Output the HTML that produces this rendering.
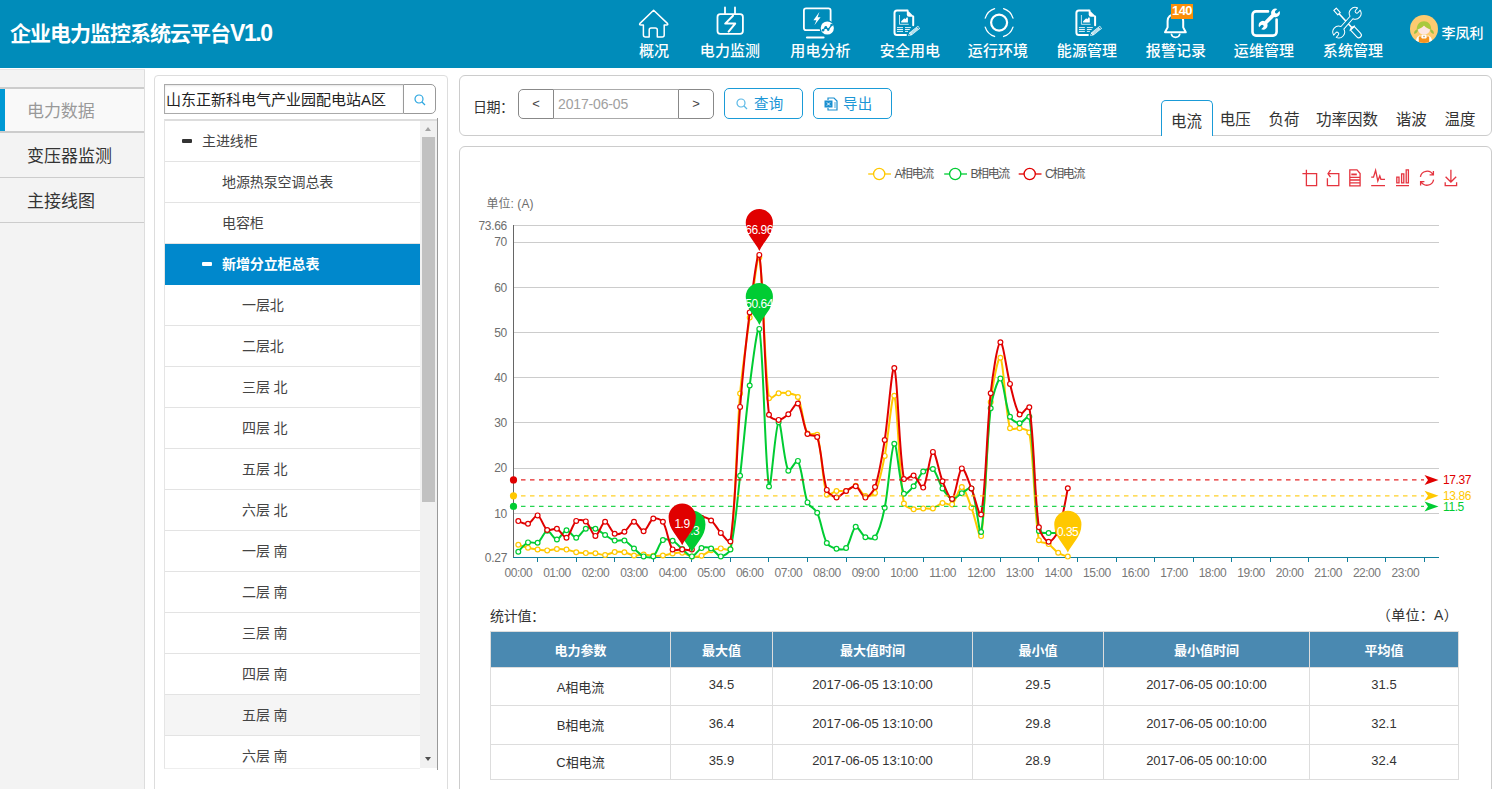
<!DOCTYPE html>
<html lang="zh-CN"><head><meta charset="utf-8"><title>企业电力监控系统云平台V1.0</title>
<style>
*{box-sizing:border-box;margin:0;padding:0}
html,body{width:1494px;height:789px;overflow:hidden;background:#fff;font-family:"Liberation Sans","Noto Sans CJK SC",sans-serif;color:#333}
#hdr{position:absolute;left:0;top:0;width:1492px;height:68px;background:#008cba}
#navsvg{position:absolute;left:0;top:0}
#title{position:absolute;left:10px;top:16px;font-size:21px;font-weight:bold;color:#fff;letter-spacing:-1px;line-height:34px;white-space:nowrap}
.nav{position:absolute;top:0;width:100px;height:68px;text-align:center;color:#fff}
.nav span{position:absolute;left:0;width:100px;top:41px;font-size:15px;line-height:20px;letter-spacing:0.1px;white-space:nowrap;font-weight:500;text-indent:0}
.badge{position:absolute;left:45px;top:4px;width:22px;height:15px;z-index:2;background:#fb8f09;color:#fff;font-size:13px;line-height:13px;font-weight:bold;text-align:center;letter-spacing:-0.6px}
#user{position:absolute;left:1410px;top:15px;height:30px;color:#fff}
#user svg{position:absolute;left:0;top:0;width:28px;height:28px}
#user span{position:absolute;left:31.500px;top:7.500px;font-size:14px;line-height:20px;letter-spacing:0;white-space:nowrap;font-weight:500}
#side{position:absolute;left:0;top:69px;width:145px;height:720px;background:#f3f3f3;border-right:1px solid #ddd;border-top:1px solid #e6e6e6}
.sitem{position:absolute;left:0;width:144px;height:46px;border-top:1px solid #ccc;border-bottom:1px solid #ccc;font-size:17px;line-height:48px;padding-left:27px;color:#333;letter-spacing:0}
.sitem:nth-child(1){top:17px}
.sitem:nth-child(2){top:62px}
.sitem:nth-child(3){top:107px}
.sitem.act{background:#f9f9f9;box-shadow:inset 5px 0 0 #0099d4;color:#999;border-top:2px solid #ccc;border-bottom:2px solid #ccc;line-height:45px;letter-spacing:-0.1px}
#treep{position:absolute;left:154px;top:75px;width:294px;height:730px;border:1px solid #ddd;border-radius:4px;background:#fff}
#search{position:absolute;left:9px;top:8px;width:272px;height:30px}
.sin{position:absolute;left:0;top:0;width:239px;height:30px;border:1px solid #aaa;border-right:none;font-size:15px;line-height:29px;padding-left:1px;color:#222;white-space:nowrap;overflow:hidden;letter-spacing:0;box-shadow:inset 0 1px 2px rgba(0,0,0,.1)}
.sbtn{position:absolute;left:239px;top:0;width:33px;height:30px;border:1px solid #999;border-radius:0 5px 5px 0;background:#fff}
.sbtn svg{position:absolute;left:10px;top:9px;width:12px;height:12px}
#tree{position:absolute;left:9px;top:43px;width:256px;height:650px;overflow:hidden;border-top:2px solid #ddd;border-left:1px solid #e5e5e5;border-bottom:1px solid #eee}
.trow{position:relative;height:41px;border-bottom:1px solid #e3e3e3;font-size:14px;line-height:40px;color:#444;white-space:nowrap;background:#fff;letter-spacing:-0.1px}
.trow.l0{padding-left:37px}
.trow.l1{padding-left:57px}
.trow.l2{padding-left:77px}
.trow.sel{background:#0088cc;color:#fff;font-weight:bold;border-bottom-color:#0088cc}
.trow.hov{background:#f5f5f5}
.trow .minus{position:absolute;top:18px;width:10px;height:4px;background:#333;border-radius:1px}
.trow.l0 .minus{left:17px}
.trow.l1 .minus{left:37px;background:#fff}
#sbar{position:absolute;left:265px;top:42px;width:18px;height:652px;background:linear-gradient(#fff 0,#fff 1px,#ddd 1px,#ddd 3px,#f1f1f1 3px,#f1f1f1 650px,#fff 650px);border-right:1px solid #999}
#sbar .thumb{position:absolute;left:2px;top:19px;width:13px;height:365px;background:#c1c1c1}
#sbar .up{position:absolute;left:5px;top:9px;border:3.500px solid transparent;border-bottom:4px solid #a3a3a3;border-top:none}
#sbar .down{position:absolute;left:5px;bottom:9px;border:3.500px solid transparent;border-top:4px solid #505050;border-bottom:none}
#topp{position:absolute;left:459px;top:75px;width:1033px;height:61px;border:1px solid #ccc;border-radius:6px;background:#fff}
#topp .lbl{position:absolute;left:13px;top:21px;font-size:14px;line-height:20px;color:#333;letter-spacing:-0.5px}
.dgrp{position:absolute;left:58px;top:13px;width:196px;height:30px}
.db{position:absolute;top:0;width:36px;height:30px;border:1px solid #888;font-size:13px;line-height:28px;text-align:center;color:#444;background:#fff}
.db.l{left:0;border-radius:5px 0 0 5px}
.db.r{left:160px;border-radius:0 5px 5px 0}
.dv{position:absolute;left:36px;top:0;width:124px;height:30px;border-top:1px solid #aaa;border-bottom:1px solid #aaa;font-size:14px;line-height:28px;color:#a0a0a0;padding-left:4px;letter-spacing:-0.15px}
.btn{position:absolute;top:12px;height:31px;border:1px solid #1a9bd7;border-radius:5px;color:#1b96d6;font-size:14.500px;line-height:31px;background:#fff}
.btn.q{left:264px;width:79px}
.btn.e{left:353px;width:79px}
.btn svg{position:absolute;left:10px;top:8px;width:14px;height:14px}
.btn span{position:absolute;left:29px;top:0;letter-spacing:0.2px;white-space:nowrap}
#tabs{position:absolute;left:701px;top:24px;height:36px;white-space:nowrap}
.tab{position:absolute;top:0;height:36px;width:80px;font-size:15.5px;line-height:40px;color:#333;letter-spacing:0;text-align:center;white-space:nowrap}
.tab.act{left:0;width:52px;border:1px solid #1a9bd7;border-bottom:none;border-radius:5px 5px 0 0;background:#fff;height:36px;line-height:41px;text-indent:-1px}
.tab:nth-child(2){left:34.200px}
.tab:nth-child(3){left:83px}
.tab:nth-child(4){left:146.100px}
.tab:nth-child(5){left:210.200px}
.tab:nth-child(6){left:259px}
#chartp{position:absolute;left:459px;top:146px;width:1033px;height:660px;border:1px solid #ccc;border-radius:6px;background:#fff}
#chartp svg.chart{position:absolute;left:-460px;top:-147px}
.stl{position:absolute;left:30px;top:460px;font-size:14px;line-height:18px;color:#333;letter-spacing:-0.3px}
.str{position:absolute;right:33px;top:459px;font-size:14px;line-height:18px;color:#333;letter-spacing:0.3px}
#tbl{position:absolute;left:30px;top:484px;width:968px;border-collapse:collapse;table-layout:fixed;font-size:13px}
#tbl th{background:#4a89b1;color:#fff;height:35.500px;border:1px solid #ddd;font-weight:bold;font-size:13px;letter-spacing:0}
#tbl td{height:38px;border:1px solid #ddd;text-align:center;color:#333;font-size:13px}
#tbl td+td{padding-bottom:3px}
#tbl tr:nth-child(2) td{height:39px}
#tbl tr:nth-child(3) td{height:35.500px}
#tbl th:nth-child(1){width:180px}
#tbl th:nth-child(2){width:102px}
#tbl th:nth-child(3){width:200px}
#tbl th:nth-child(4){width:131px}
#tbl th:nth-child(5){width:206px}
#tbl th:nth-child(6){width:149px}

</style></head><body>
<div id="hdr">
<div id="title">企业电力监控系统云平台<span style="letter-spacing:-1.4px;font-size:23px">V1.0</span></div>
<div class="nav" style="left:604.0px"><span>概况</span></div>
<div class="nav" style="left:680.0px"><span>电力监测</span></div>
<div class="nav" style="left:770.5px"><span>用电分析</span></div>
<div class="nav" style="left:860.0px"><span>安全用电</span></div>
<div class="nav" style="left:948.0px"><span>运行环境</span></div>
<div class="nav" style="left:1037.0px"><span>能源管理</span></div>
<div class="nav" style="left:1126.0px"><b class="badge">140</b><span>报警记录</span></div>
<div class="nav" style="left:1214.0px"><span>运维管理</span></div>
<div class="nav" style="left:1303.0px"><span>系统管理</span></div>
<svg id="navsvg" width="1494" height="68" viewBox="0 0 1494 68" fill="none" stroke="#fff" stroke-width="1.600" stroke-linecap="round" stroke-linejoin="round">
<path d="M653.600 10.200 L640 23.400 Q638.800 25 641 25 H643.400 V35 Q643.400 37 645.400 37 H649.200 V30 Q649.200 28 651.200 28 H655.300 Q657.300 28 657.300 30 V37 H662.200 Q664.200 37 664.200 35 V25 H666.400 Q668.600 25 667.400 23.400 Z" stroke-width="1.500"/>
<rect x="717.500" y="14.200" width="25.400" height="19.600" rx="2.800" stroke-width="1.800"/><path d="M725 7.500 V14 M735 7.500 V14" stroke-width="1.800"/><path d="M733 15.800 L725.200 23.600 H735.200 L728.600 31.600" stroke-width="2"/>
<rect x="803.900" y="8.300" width="26.700" height="21.800" rx="2.200" stroke-width="1.800"/><path d="M807 37.500 H823.500" stroke-width="2.200"/><path d="M819.400 12 L813.400 20.200 H816.400 L814.400 25.200 L820.600 17.200 H817.600 Z" fill="#fff" stroke="none"/><circle cx="827.300" cy="28" r="7.800" fill="#008cba" stroke="none"/><circle cx="827.300" cy="28" r="6.600" fill="#fff" stroke="none"/><path d="M822.800 30.400 L825.800 27.200 L828.200 29.600 L832 24.600" stroke="#008cba" stroke-width="1.300"/><g fill="#008cba" stroke="none"><circle cx="825.800" cy="27.200" r="1.300"/><circle cx="828.200" cy="29.600" r="1.300"/><circle cx="831.600" cy="25" r="1.300"/><circle cx="823" cy="30.200" r="1.300"/></g>
<g transform="translate(0.0 0)"><path d="M907.600 10.400 H897 Q894.500 10.400 894.500 12.900 V32.500 Q894.500 35 897 35 H906 M913.200 16.500 V25.200" stroke-width="2"/><path d="M906.800 9.400 L914.200 16.800 H909 Q906.800 16.800 906.800 14.600 Z" fill="#fff" stroke="none"/><path d="M899.500 15.400 V24.300 H908.300" stroke-width="0.900" opacity="0.850"/><path d="M901.200 22.600 V21.300 L904.300 18.200 L905.300 19.300 L907.100 17 L907.900 18.200 V22.600 Z" fill="#fff" stroke="none"/><path d="M897 27.600 H903 M905 27.600 H910.900 M897 29.500 H903 M905 29.500 H909.800 M897 31.400 H903 M905 31.400 H908" stroke-width="0.900" stroke-linecap="butt"/><g transform="translate(908.100 35.900) rotate(-39)"><path d="M0 0 L3.200 -1.700 H14 V1.700 H3.200 Z" fill="#fff" stroke="none"/><path d="M1.400 0 L2.600 0" stroke="#008cba" stroke-width="0.900"/><path d="M4.200 -0.900 H11.600 M4.200 0 H11.600 M4.200 0.900 H11.600" stroke="#008cba" stroke-width="0.450" opacity="0.700"/><rect x="12.300" y="-1.100" width="1.100" height="2.200" fill="#008cba" stroke="none"/></g></g>
<circle cx="999.100" cy="22.600" r="8" stroke-width="2.200"/><path d="M1012.99 27.11 A14.60 14.60 0 0 1 1003.61 36.49" stroke-width="1.300"/><path d="M994.59 36.49 A14.60 14.60 0 0 1 985.21 27.11" stroke-width="1.300"/><path d="M985.21 18.09 A14.60 14.60 0 0 1 994.59 8.71" stroke-width="1.300"/><path d="M1003.61 8.71 A14.60 14.60 0 0 1 1012.99 18.09" stroke-width="1.300"/>
<g transform="translate(181.9 0)"><path d="M907.600 10.400 H897 Q894.500 10.400 894.500 12.900 V32.500 Q894.500 35 897 35 H906 M913.200 16.500 V25.200" stroke-width="2"/><path d="M906.800 9.400 L914.200 16.800 H909 Q906.800 16.800 906.800 14.600 Z" fill="#fff" stroke="none"/><path d="M899.500 15.400 V24.300 H908.300" stroke-width="0.900" opacity="0.850"/><path d="M901.200 22.600 V21.300 L904.300 18.200 L905.300 19.300 L907.100 17 L907.900 18.200 V22.600 Z" fill="#fff" stroke="none"/><path d="M897 27.600 H903 M905 27.600 H910.900 M897 29.500 H903 M905 29.500 H909.800 M897 31.400 H903 M905 31.400 H908" stroke-width="0.900" stroke-linecap="butt"/><g transform="translate(908.100 35.900) rotate(-39)"><path d="M0 0 L3.200 -1.700 H14 V1.700 H3.200 Z" fill="#fff" stroke="none"/><path d="M1.400 0 L2.600 0" stroke="#008cba" stroke-width="0.900"/><path d="M4.200 -0.900 H11.600 M4.200 0 H11.600 M4.200 0.900 H11.600" stroke="#008cba" stroke-width="0.450" opacity="0.700"/><rect x="12.300" y="-1.100" width="1.100" height="2.200" fill="#008cba" stroke="none"/></g></g>
<path d="M1165 32.300 L1167.600 27.400 V21 C1167.600 16.500 1170.600 14.200 1175.400 14.200 C1180.200 14.200 1183.200 16.500 1183.200 21 V27.400 L1185.800 32.300 Z" stroke-width="2"/><path d="M1171.400 34.200 C1172.200 38.400 1179 38.400 1179.800 34.200" stroke-width="1.600"/>
<path d="M1276.600 19.500 V32.100 a3.500 3.500 0 0 1 -3.500 3.500 H1256 a3.500 3.500 0 0 1 -3.500 -3.500 V14.900 a3.500 3.500 0 0 1 3.500 -3.500 H1268" stroke-width="2.600"/><g transform="translate(1269.300 19.100) rotate(-45)"><path d="M4.80 -1.90 A4.40 4.40 0 0 1 12.91 -1.50 L10.20 -1.50 A1.50 1.50 0 0 0 10.20 1.50 L12.91 1.50 A4.40 4.40 0 0 1 4.80 1.90 L-4.80 1.90 A4.40 4.40 0 0 1 -12.91 1.50 L-10.20 1.50 A1.50 1.50 0 0 0 -10.20 -1.50 L-12.91 -1.50 A4.40 4.40 0 0 1 -4.80 -1.90 Z" fill="#fff" stroke="none"/></g>
<g stroke-width="1.100" transform="translate(1335.050 9.350) rotate(47.400)"><rect x="0" y="-1.700" width="5.900" height="3.400" fill="#008cba"/><path d="M5.900 0 H25" stroke-width="1.600" stroke-linecap="butt"/><path d="M24.400 -0.800 L25.600 -3.600 V3.600 L24.400 0.800 Z" fill="#fff" stroke-width="0.600"/><path d="M25.700 -2.600 H35 A2.600 2.600 0 0 1 35 2.600 H25.700 Z" fill="#008cba"/></g><g stroke-width="1" transform="translate(1346.950 22.650) rotate(-48.600)"><path d="M6.86 -1.90 A5.90 5.90 0 0 1 18.10 -1.70 L15.00 -1.70 A1.70 1.70 0 0 0 15.00 1.70 L18.10 1.70 A5.90 5.90 0 0 1 6.86 1.90 L-6.86 1.90 A5.90 5.90 0 0 1 -18.10 1.70 L-15.00 1.70 A1.70 1.70 0 0 0 -15.00 -1.70 L-18.10 -1.70 A5.90 5.90 0 0 1 -6.86 -1.90 Z" fill="#008cba"/></g>
</svg>
<div id="user"><svg viewBox="0 0 28 28"><circle cx="14" cy="14" r="14" fill="#fdcb70"/><path d="M6.500 14.500 C4.500 15.500 3.800 17.500 4.300 19 C6 18.600 7.500 17.200 8 15.500 Z M21.500 14.500 C23.500 15.500 24.200 17.500 23.700 19 C22 18.600 20.500 17.200 20 15.500 Z" fill="#9bbf45"/><path d="M6.800 15 C6.500 9.500 10 6.200 14 6.200 C18 6.200 21.500 9.500 21.200 15 C19 14 16 12.500 14 10.500 C12 12.500 9 14 6.800 15 Z" fill="#a9c93f"/><path d="M8 14.600 C10 13.800 12.500 12.400 14 10.800 C15.500 12.400 18 13.800 20 14.600 C19.600 17.800 17 19.600 14 19.600 C11 19.600 8.400 17.800 8 14.600 Z" fill="#fde6e2"/><path d="M6 25.600 C6.400 22.500 7.600 21 9.500 20.400 H18.500 C20.400 21 21.600 22.500 22 25.600 C19.800 27.200 17 28 14 28 C11 28 8.200 27.200 6 25.600 Z" fill="#fff"/><path d="M8.800 27 V21.500 H10.800 V20 H17.200 V21.500 H19.200 V27 C17.600 27.700 15.800 28 14 28 C12.200 28 10.400 27.700 8.800 27 Z" fill="#f7931e"/><rect x="11.300" y="19.800" width="5.400" height="3.600" rx="0.800" fill="#fff"/><rect x="13.200" y="20.800" width="1.600" height="1.400" fill="#c9a26a"/></svg><span>李凤利</span></div>
</div>
<div id="side">
 <div class="sitem act">电力数据</div>
 <div class="sitem">变压器监测</div>
 <div class="sitem">主接线图</div>
</div>
<div id="treep">
 <div id="search"><div class="sin">山东正新科电气产业园配电站A区</div><div class="sbtn"><svg viewBox="0 0 12 12" fill="none" stroke="#2ba6e0" stroke-width="1.200"><circle cx="5" cy="5" r="4"/><path d="M8 8 L11 11"/></svg></div></div>
 <div id="tree">
<div class="trow l0"><i class="minus"></i><span>主进线柜</span></div>
<div class="trow l1"><span>地源热泵空调总表</span></div>
<div class="trow l1"><span>电容柜</span></div>
<div class="trow l1 sel"><i class="minus"></i><span>新增分立柜总表</span></div>
<div class="trow l2"><span>一层北</span></div>
<div class="trow l2"><span>二层北</span></div>
<div class="trow l2"><span>三层 北</span></div>
<div class="trow l2"><span>四层 北</span></div>
<div class="trow l2"><span>五层 北</span></div>
<div class="trow l2"><span>六层 北</span></div>
<div class="trow l2"><span>一层 南</span></div>
<div class="trow l2"><span>二层 南</span></div>
<div class="trow l2"><span>三层 南</span></div>
<div class="trow l2"><span>四层 南</span></div>
<div class="trow l2 hov"><span>五层 南</span></div>
<div class="trow l2"><span>六层 南</span></div>

 </div>
 <div id="sbar"><i class="up"></i><i class="thumb"></i><i class="down"></i></div>
</div>
<div id="topp">
 <span class="lbl">日期：</span>
 <div class="dgrp"><div class="db l">&lt;</div><div class="dv">2017-06-05</div><div class="db r">&gt;</div></div>
 <div class="btn q"><svg viewBox="0 0 14 14" fill="none" stroke="#5bb8e6" stroke-width="1.200"><circle cx="6" cy="6" r="4"/><path d="M9 9 L12 12"/></svg><span>查询</span></div>
 <div class="btn e"><svg viewBox="0 0 14 14" fill="none" stroke="#1a8fd0" stroke-width="1.200"><path d="M4 3 V1 H10 L13 4 V13 H4 V11"/><rect x="0.500" y="3.500" width="8" height="7" fill="#1a8fd0" stroke="none"/><path d="M3 5.500 L6 8.500 M6 5.500 L3 8.500" stroke="#fff" stroke-width="1"/><path d="M10 6 H12 M10 8 H12 M10 10 H12" stroke-width="0.800"/></svg><span>导出</span></div>
 <div id="tabs"><div class="tab act">电流</div><div class="tab">电压</div><div class="tab">负荷</div><div class="tab">功率因数</div><div class="tab">谐波</div><div class="tab">温度</div></div>
</div>
<div id="chartp">
<svg class="chart" width="1494" height="789" viewBox="0 0 1494 789" font-family="Liberation Sans, Noto Sans CJK SC, sans-serif">
<g stroke="#ccc" stroke-width="1" shape-rendering="crispEdges"><path d="M514 225.5 H1439"/><path d="M514 242.5 H1439"/><path d="M514 287.5 H1439"/><path d="M514 332.5 H1439"/><path d="M514 377.5 H1439"/><path d="M514 422.5 H1439"/><path d="M514 468.5 H1439"/><path d="M514 513.5 H1439"/></g>
<g fill="#6e6e6e" font-size="12" text-anchor="end" letter-spacing="-0.3"><text x="507" y="229.8">73.66</text><text x="507" y="246.3">70</text><text x="507" y="291.5">60</text><text x="507" y="336.7">50</text><text x="507" y="381.9">40</text><text x="507" y="427.1">30</text><text x="507" y="472.3">20</text><text x="507" y="517.5">10</text><text x="507" y="561.5">0.27</text></g>
<text x="486.500" y="208" fill="#6e6e6e" font-size="12" letter-spacing="0.050">单位: (A)</text>
<path d="M513.5 225 V558" stroke="#666" stroke-width="1" shape-rendering="crispEdges"/>
<path d="M513 557.5 H1439" stroke="#0f7f9c" stroke-width="1" shape-rendering="crispEdges"/>
<g stroke="#0f7f9c" stroke-width="1" shape-rendering="crispEdges"><path d="M537.5 557 V562"/><path d="M576.5 557 V562"/><path d="M614.5 557 V562"/><path d="M653.5 557 V562"/><path d="M691.5 557 V562"/><path d="M730.5 557 V562"/><path d="M768.5 557 V562"/><path d="M807.5 557 V562"/><path d="M846.5 557 V562"/><path d="M884.5 557 V562"/><path d="M923.5 557 V562"/><path d="M961.5 557 V562"/><path d="M1000.5 557 V562"/><path d="M1038.5 557 V562"/><path d="M1077.5 557 V562"/><path d="M1116.5 557 V562"/><path d="M1154.5 557 V562"/><path d="M1193.5 557 V562"/><path d="M1231.5 557 V562"/><path d="M1270.5 557 V562"/><path d="M1308.5 557 V562"/><path d="M1347.5 557 V562"/><path d="M1385.5 557 V562"/><path d="M1424.5 557 V562"/></g>
<g fill="#777" font-size="12" text-anchor="middle" letter-spacing="-0.5"><text x="518.3" y="577">00:00</text><text x="556.9" y="577">01:00</text><text x="595.4" y="577">02:00</text><text x="634.0" y="577">03:00</text><text x="672.6" y="577">04:00</text><text x="711.1" y="577">05:00</text><text x="749.7" y="577">06:00</text><text x="788.3" y="577">07:00</text><text x="826.8" y="577">08:00</text><text x="865.4" y="577">09:00</text><text x="903.9" y="577">10:00</text><text x="942.5" y="577">11:00</text><text x="981.1" y="577">12:00</text><text x="1019.6" y="577">13:00</text><text x="1058.2" y="577">14:00</text><text x="1096.8" y="577">15:00</text><text x="1135.3" y="577">16:00</text><text x="1173.9" y="577">17:00</text><text x="1212.4" y="577">18:00</text><text x="1251.0" y="577">19:00</text><text x="1289.6" y="577">20:00</text><text x="1328.1" y="577">21:00</text><text x="1366.7" y="577">22:00</text><text x="1405.3" y="577">23:00</text></g>
<path d="M518.3 544.7C518.3 544.7 525.0 547.0 528.0 547.7C530.8 548.4 534.7 549.1 537.6 549.5C540.5 549.9 544.4 550.4 547.2 550.4C550.1 550.3 554.0 549.1 556.9 549.0C559.8 548.8 563.7 549.1 566.5 549.6C569.5 550.1 573.2 551.7 576.2 552.2C579.0 552.8 582.9 552.9 585.8 553.1C588.7 553.2 592.6 553.0 595.4 553.3C598.4 553.6 602.2 555.1 605.1 555.0C608.0 554.8 611.8 552.5 614.7 552.1C617.6 551.7 621.6 551.7 624.4 552.2C627.3 552.8 631.0 555.2 634.0 555.5C636.8 555.9 640.8 554.4 643.6 554.5C646.5 554.5 650.4 555.6 653.3 555.8C656.2 556.0 660.1 555.9 662.9 555.5C665.9 555.2 669.7 553.9 672.6 553.5C675.4 553.1 679.4 552.2 682.2 552.7C685.2 553.1 688.9 555.9 691.9 556.4C694.6 556.8 698.8 556.7 701.5 555.8C704.6 554.8 708.1 551.4 711.1 550.2C713.8 549.1 717.9 548.6 720.8 548.4C723.6 548.2 730.1 551.7 730.4 549.0C735.9 505.2 736.2 440.0 740.1 393.5C742.0 370.6 746.5 340.3 749.7 317.6C752.3 299.5 757.6 250.2 759.3 257.5C763.4 274.4 763.6 360.4 769.0 398.2C769.4 401.1 775.6 394.0 778.6 393.2C781.3 392.5 785.5 392.7 788.3 393.2C791.3 393.8 796.7 394.4 797.9 397.0C802.4 406.5 802.9 424.5 807.5 433.5C808.7 435.8 816.4 432.2 817.2 434.7C822.2 450.5 821.9 480.3 826.8 494.7C827.7 497.2 833.5 491.6 836.5 491.0C839.3 490.5 843.4 491.7 846.1 491.0C849.2 490.2 853.2 485.2 855.7 485.8C859.0 486.6 862.0 494.7 865.4 495.9C867.8 496.8 873.8 495.4 875.0 492.9C879.6 483.4 882.4 467.1 884.7 455.9C888.2 438.0 892.2 390.6 894.3 395.8C898.0 405.0 898.7 472.8 903.9 503.6C904.5 506.8 910.5 508.4 913.6 509.2C916.3 509.9 920.3 508.5 923.2 508.4C926.1 508.3 930.2 509.2 932.9 508.4C936.0 507.5 939.4 503.6 942.5 503.0C945.2 502.4 950.2 506.0 952.1 504.4C956.0 501.2 959.1 486.7 961.8 487.1C964.9 487.6 968.9 501.3 971.4 507.6C974.7 516.0 980.0 541.9 981.1 536.1C985.8 510.2 986.4 442.0 990.7 401.9C992.2 388.4 998.1 354.6 1000.4 357.7C1003.9 362.5 1004.9 409.6 1010.0 428.2C1010.7 430.7 1016.9 427.6 1019.6 428.2C1022.7 428.9 1028.8 429.5 1029.3 432.5C1034.5 463.1 1033.6 509.7 1038.9 540.3C1039.4 543.2 1046.0 542.4 1048.6 544.1C1051.8 546.2 1055.0 550.7 1058.2 552.8C1060.8 554.5 1067.8 556.6 1067.8 556.6" fill="none" stroke="#ffc800" stroke-width="2" stroke-linejoin="round"/>
<g fill="#fff" stroke="#ffc800" stroke-width="1.2"><circle cx="518.3" cy="544.7" r="2.4"/><circle cx="528.0" cy="547.7" r="2.4"/><circle cx="537.6" cy="549.5" r="2.4"/><circle cx="547.2" cy="550.4" r="2.4"/><circle cx="556.9" cy="549.0" r="2.4"/><circle cx="566.5" cy="549.6" r="2.4"/><circle cx="576.2" cy="552.2" r="2.4"/><circle cx="585.8" cy="553.1" r="2.4"/><circle cx="595.4" cy="553.3" r="2.4"/><circle cx="605.1" cy="555.0" r="2.4"/><circle cx="614.7" cy="552.1" r="2.4"/><circle cx="624.4" cy="552.2" r="2.4"/><circle cx="634.0" cy="555.5" r="2.4"/><circle cx="643.6" cy="554.5" r="2.4"/><circle cx="653.3" cy="555.8" r="2.4"/><circle cx="662.9" cy="555.5" r="2.4"/><circle cx="672.6" cy="553.5" r="2.4"/><circle cx="682.2" cy="552.7" r="2.4"/><circle cx="691.9" cy="556.4" r="2.4"/><circle cx="701.5" cy="555.8" r="2.4"/><circle cx="711.1" cy="550.2" r="2.4"/><circle cx="720.8" cy="548.4" r="2.4"/><circle cx="730.4" cy="549.0" r="2.4"/><circle cx="740.1" cy="393.5" r="2.4"/><circle cx="749.7" cy="317.6" r="2.4"/><circle cx="759.3" cy="257.5" r="2.4"/><circle cx="769.0" cy="398.2" r="2.4"/><circle cx="778.6" cy="393.2" r="2.4"/><circle cx="788.3" cy="393.2" r="2.4"/><circle cx="797.9" cy="397.0" r="2.4"/><circle cx="807.5" cy="433.5" r="2.4"/><circle cx="817.2" cy="434.7" r="2.4"/><circle cx="826.8" cy="494.7" r="2.4"/><circle cx="836.5" cy="491.0" r="2.4"/><circle cx="846.1" cy="491.0" r="2.4"/><circle cx="855.7" cy="485.8" r="2.4"/><circle cx="865.4" cy="495.9" r="2.4"/><circle cx="875.0" cy="492.9" r="2.4"/><circle cx="884.7" cy="455.9" r="2.4"/><circle cx="894.3" cy="395.8" r="2.4"/><circle cx="903.9" cy="503.6" r="2.4"/><circle cx="913.6" cy="509.2" r="2.4"/><circle cx="923.2" cy="508.4" r="2.4"/><circle cx="932.9" cy="508.4" r="2.4"/><circle cx="942.5" cy="503.0" r="2.4"/><circle cx="952.1" cy="504.4" r="2.4"/><circle cx="961.8" cy="487.1" r="2.4"/><circle cx="971.4" cy="507.6" r="2.4"/><circle cx="981.1" cy="536.1" r="2.4"/><circle cx="990.7" cy="401.9" r="2.4"/><circle cx="1000.4" cy="357.7" r="2.4"/><circle cx="1010.0" cy="428.2" r="2.4"/><circle cx="1019.6" cy="428.2" r="2.4"/><circle cx="1029.3" cy="432.5" r="2.4"/><circle cx="1038.9" cy="540.3" r="2.4"/><circle cx="1048.6" cy="544.1" r="2.4"/><circle cx="1058.2" cy="552.8" r="2.4"/><circle cx="1067.8" cy="556.6" r="2.4"/></g>
<path d="M518.3 551.8C518.3 551.8 524.6 544.0 528.0 542.4C530.4 541.2 535.4 544.1 537.6 542.8C541.2 540.7 544.1 531.4 547.2 530.8C549.9 530.4 554.0 539.6 556.9 539.5C559.8 539.4 563.5 530.5 566.5 530.3C569.3 530.0 573.4 537.9 576.2 537.7C579.2 537.4 582.5 530.3 585.8 528.8C588.3 527.6 592.8 527.9 595.4 528.8C598.6 529.8 602.2 533.2 605.1 535.0C607.9 536.7 611.6 539.7 614.7 540.6C617.4 541.3 621.9 539.5 624.4 540.6C627.6 541.9 631.1 546.2 634.0 548.5C636.9 550.9 640.4 555.0 643.6 556.4C646.2 557.4 651.3 558.0 653.3 556.4C657.1 553.1 659.1 543.2 662.9 540.1C664.9 538.6 670.1 539.6 672.6 540.7C675.9 542.2 679.3 546.6 682.2 549.0C685.0 551.3 689.0 556.5 691.9 556.4C694.8 556.2 698.2 549.5 701.5 548.1C704.0 547.1 708.6 547.5 711.1 548.5C714.4 549.9 717.8 556.2 720.8 556.4C723.6 556.5 729.6 552.7 730.4 549.4C735.4 528.5 737.5 497.9 740.1 475.8C743.2 448.7 746.2 412.5 749.7 385.5C751.9 368.4 757.8 320.8 759.3 328.9C763.6 351.1 764.9 466.7 769.0 486.5C770.7 494.7 775.3 424.9 778.6 422.2C781.1 420.2 783.7 461.6 788.3 470.7C789.5 473.2 796.5 458.6 797.9 460.9C802.3 468.1 803.2 490.7 807.5 502.4C809.0 506.3 815.4 509.0 817.2 512.7C821.2 521.1 822.5 535.0 826.8 543.0C828.3 545.8 833.4 547.9 836.5 548.7C839.1 549.4 844.4 549.9 846.1 548.0C850.2 543.4 852.1 528.8 855.7 526.8C857.9 525.6 861.9 535.3 865.4 537.2C867.7 538.5 873.7 539.7 875.0 537.6C879.4 530.9 882.8 517.0 884.7 507.8C888.6 488.8 891.1 446.1 894.3 443.7C896.8 441.8 899.3 483.4 903.9 493.7C905.1 496.2 911.2 489.0 913.6 486.3C917.0 482.4 919.5 474.9 923.2 471.6C925.3 469.7 931.0 467.4 932.9 469.0C936.8 472.4 939.0 483.0 942.5 488.4C944.8 492.0 948.9 498.2 952.1 499.0C954.7 499.6 958.8 494.8 961.8 493.2C964.6 491.6 970.3 486.1 971.4 488.4C976.1 497.8 979.5 538.4 981.1 532.0C985.3 514.3 986.1 445.1 990.7 408.3C991.9 399.0 997.8 377.5 1000.4 378.6C1003.6 380.0 1005.5 406.5 1010.0 416.8C1011.3 419.8 1016.7 423.2 1019.6 423.2C1022.5 423.2 1028.7 413.8 1029.3 416.8C1034.5 446.2 1033.6 498.9 1038.9 531.0C1039.4 533.8 1045.6 532.7 1048.6 533.0C1051.4 533.3 1055.3 532.7 1058.2 533.0C1061.1 533.3 1067.8 535.0 1067.8 535.0" fill="none" stroke="#00cc33" stroke-width="2" stroke-linejoin="round"/>
<g fill="#fff" stroke="#00cc33" stroke-width="1.2"><circle cx="518.3" cy="551.8" r="2.4"/><circle cx="528.0" cy="542.4" r="2.4"/><circle cx="537.6" cy="542.8" r="2.4"/><circle cx="547.2" cy="530.8" r="2.4"/><circle cx="556.9" cy="539.5" r="2.4"/><circle cx="566.5" cy="530.3" r="2.4"/><circle cx="576.2" cy="537.7" r="2.4"/><circle cx="585.8" cy="528.8" r="2.4"/><circle cx="595.4" cy="528.8" r="2.4"/><circle cx="605.1" cy="535.0" r="2.4"/><circle cx="614.7" cy="540.6" r="2.4"/><circle cx="624.4" cy="540.6" r="2.4"/><circle cx="634.0" cy="548.5" r="2.4"/><circle cx="643.6" cy="556.4" r="2.4"/><circle cx="653.3" cy="556.4" r="2.4"/><circle cx="662.9" cy="540.1" r="2.4"/><circle cx="672.6" cy="540.7" r="2.4"/><circle cx="682.2" cy="549.0" r="2.4"/><circle cx="691.9" cy="556.4" r="2.4"/><circle cx="701.5" cy="548.1" r="2.4"/><circle cx="711.1" cy="548.5" r="2.4"/><circle cx="720.8" cy="556.4" r="2.4"/><circle cx="730.4" cy="549.4" r="2.4"/><circle cx="740.1" cy="475.8" r="2.4"/><circle cx="749.7" cy="385.5" r="2.4"/><circle cx="759.3" cy="328.9" r="2.4"/><circle cx="769.0" cy="486.5" r="2.4"/><circle cx="778.6" cy="422.2" r="2.4"/><circle cx="788.3" cy="470.7" r="2.4"/><circle cx="797.9" cy="460.9" r="2.4"/><circle cx="807.5" cy="502.4" r="2.4"/><circle cx="817.2" cy="512.7" r="2.4"/><circle cx="826.8" cy="543.0" r="2.4"/><circle cx="836.5" cy="548.7" r="2.4"/><circle cx="846.1" cy="548.0" r="2.4"/><circle cx="855.7" cy="526.8" r="2.4"/><circle cx="865.4" cy="537.2" r="2.4"/><circle cx="875.0" cy="537.6" r="2.4"/><circle cx="884.7" cy="507.8" r="2.4"/><circle cx="894.3" cy="443.7" r="2.4"/><circle cx="903.9" cy="493.7" r="2.4"/><circle cx="913.6" cy="486.3" r="2.4"/><circle cx="923.2" cy="471.6" r="2.4"/><circle cx="932.9" cy="469.0" r="2.4"/><circle cx="942.5" cy="488.4" r="2.4"/><circle cx="952.1" cy="499.0" r="2.4"/><circle cx="961.8" cy="493.2" r="2.4"/><circle cx="971.4" cy="488.4" r="2.4"/><circle cx="981.1" cy="532.0" r="2.4"/><circle cx="990.7" cy="408.3" r="2.4"/><circle cx="1000.4" cy="378.6" r="2.4"/><circle cx="1010.0" cy="416.8" r="2.4"/><circle cx="1019.6" cy="423.2" r="2.4"/><circle cx="1029.3" cy="416.8" r="2.4"/><circle cx="1038.9" cy="531.0" r="2.4"/><circle cx="1048.6" cy="533.0" r="2.4"/><circle cx="1058.2" cy="533.0" r="2.4"/><circle cx="1067.8" cy="535.0" r="2.4"/></g>
<path d="M518.3 521.1C518.3 521.1 525.4 524.6 528.0 523.8C531.2 522.9 535.2 514.6 537.6 515.4C540.9 516.5 543.5 527.4 547.2 530.0C549.3 531.4 554.4 527.8 556.9 528.8C560.2 530.1 564.2 538.6 566.5 537.7C570.0 536.3 572.3 524.2 576.2 520.9C578.1 519.3 583.7 519.8 585.8 521.4C589.5 524.3 592.5 535.9 595.4 535.9C598.3 536.0 602.0 522.1 605.1 521.8C607.8 521.5 611.2 531.9 614.7 533.7C617.0 534.9 622.0 533.1 624.4 531.7C627.7 529.6 631.1 521.8 634.0 521.8C636.9 521.7 641.0 531.7 643.6 531.2C646.8 530.7 649.8 520.2 653.3 518.5C655.5 517.4 661.4 519.4 662.9 521.8C667.2 528.6 668.2 543.1 672.6 549.4C674.0 551.4 679.3 549.4 682.2 549.4C685.1 549.4 690.5 551.5 691.9 549.4C696.3 542.0 697.1 524.3 701.5 517.7C702.8 515.6 708.9 518.7 711.1 520.5C714.7 523.3 717.6 529.4 720.8 532.9C723.4 535.7 729.9 544.8 730.4 541.5C735.7 507.1 736.7 447.2 740.1 406.9C742.4 378.5 746.1 340.7 749.7 312.4C751.9 295.1 757.8 246.7 759.3 254.9C763.6 277.4 763.6 368.4 769.0 414.7C769.3 417.9 775.8 420.0 778.6 419.9C781.5 419.8 785.7 416.4 788.3 414.2C791.5 411.4 796.1 401.7 797.9 403.5C801.9 407.6 803.1 426.4 807.5 434.0C808.9 436.4 816.3 434.3 817.2 437.0C822.0 451.1 822.1 475.1 826.8 489.9C827.9 493.3 833.5 497.2 836.5 497.4C839.3 497.6 843.1 492.7 846.1 491.0C848.9 489.4 853.3 485.5 855.7 486.3C859.1 487.4 862.4 497.5 865.4 497.6C868.2 497.7 873.7 491.1 875.0 487.1C879.5 473.8 882.4 454.2 884.7 440.0C888.1 418.5 892.0 363.5 894.3 368.1C897.8 375.2 898.6 449.6 903.9 479.1C904.4 481.8 911.3 474.6 913.6 475.6C917.1 477.1 921.5 489.7 923.2 487.6C927.3 482.6 929.7 452.9 932.9 451.9C935.5 451.0 939.0 472.7 942.5 481.2C944.8 486.8 949.9 500.5 952.1 499.0C955.7 496.6 958.4 470.3 961.8 468.4C964.2 467.1 968.9 482.3 971.4 488.4C974.6 496.1 980.0 519.8 981.1 514.5C985.8 491.3 986.7 429.4 990.7 393.2C992.4 377.7 997.2 343.7 1000.4 342.2C1003.0 340.9 1006.7 371.5 1010.0 383.9C1012.5 393.2 1015.4 409.4 1019.6 414.5C1021.2 416.4 1028.7 404.1 1029.3 407.2C1034.5 437.9 1033.9 491.9 1038.9 527.2C1039.6 532.3 1045.4 541.2 1048.6 541.8C1051.2 542.3 1056.8 535.0 1058.2 531.0C1062.5 518.9 1067.8 488.2 1067.8 488.2" fill="none" stroke="#e00000" stroke-width="2" stroke-linejoin="round"/>
<g fill="#fff" stroke="#e00000" stroke-width="1.2"><circle cx="518.3" cy="521.1" r="2.4"/><circle cx="528.0" cy="523.8" r="2.4"/><circle cx="537.6" cy="515.4" r="2.4"/><circle cx="547.2" cy="530.0" r="2.4"/><circle cx="556.9" cy="528.8" r="2.4"/><circle cx="566.5" cy="537.7" r="2.4"/><circle cx="576.2" cy="520.9" r="2.4"/><circle cx="585.8" cy="521.4" r="2.4"/><circle cx="595.4" cy="535.9" r="2.4"/><circle cx="605.1" cy="521.8" r="2.4"/><circle cx="614.7" cy="533.7" r="2.4"/><circle cx="624.4" cy="531.7" r="2.4"/><circle cx="634.0" cy="521.8" r="2.4"/><circle cx="643.6" cy="531.2" r="2.4"/><circle cx="653.3" cy="518.5" r="2.4"/><circle cx="662.9" cy="521.8" r="2.4"/><circle cx="672.6" cy="549.4" r="2.4"/><circle cx="682.2" cy="549.4" r="2.4"/><circle cx="691.9" cy="549.4" r="2.4"/><circle cx="701.5" cy="517.7" r="2.4"/><circle cx="711.1" cy="520.5" r="2.4"/><circle cx="720.8" cy="532.9" r="2.4"/><circle cx="730.4" cy="541.5" r="2.4"/><circle cx="740.1" cy="406.9" r="2.4"/><circle cx="749.7" cy="312.4" r="2.4"/><circle cx="759.3" cy="254.9" r="2.4"/><circle cx="769.0" cy="414.7" r="2.4"/><circle cx="778.6" cy="419.9" r="2.4"/><circle cx="788.3" cy="414.2" r="2.4"/><circle cx="797.9" cy="403.5" r="2.4"/><circle cx="807.5" cy="434.0" r="2.4"/><circle cx="817.2" cy="437.0" r="2.4"/><circle cx="826.8" cy="489.9" r="2.4"/><circle cx="836.5" cy="497.4" r="2.4"/><circle cx="846.1" cy="491.0" r="2.4"/><circle cx="855.7" cy="486.3" r="2.4"/><circle cx="865.4" cy="497.6" r="2.4"/><circle cx="875.0" cy="487.1" r="2.4"/><circle cx="884.7" cy="440.0" r="2.4"/><circle cx="894.3" cy="368.1" r="2.4"/><circle cx="903.9" cy="479.1" r="2.4"/><circle cx="913.6" cy="475.6" r="2.4"/><circle cx="923.2" cy="487.6" r="2.4"/><circle cx="932.9" cy="451.9" r="2.4"/><circle cx="942.5" cy="481.2" r="2.4"/><circle cx="952.1" cy="499.0" r="2.4"/><circle cx="961.8" cy="468.4" r="2.4"/><circle cx="971.4" cy="488.4" r="2.4"/><circle cx="981.1" cy="514.5" r="2.4"/><circle cx="990.7" cy="393.2" r="2.4"/><circle cx="1000.4" cy="342.2" r="2.4"/><circle cx="1010.0" cy="383.9" r="2.4"/><circle cx="1019.6" cy="414.5" r="2.4"/><circle cx="1029.3" cy="407.2" r="2.4"/><circle cx="1038.9" cy="527.2" r="2.4"/><circle cx="1048.6" cy="541.8" r="2.4"/><circle cx="1058.2" cy="531.0" r="2.4"/><circle cx="1067.8" cy="488.2" r="2.4"/></g>
<circle cx="513.5" cy="495.8" r="3.6" fill="#ffc800"/><path d="M521 495.8 H1424" stroke="#ffc800" stroke-width="1.3" stroke-dasharray="4.5 4.5" fill="none" opacity="0.85"/><path d="M1438.5 495.8 L1424.5 490.8 L1428 495.8 L1424.5 500.8 Z" fill="#ffc800"/><text x="1443" y="500.1" fill="#ffc800" font-size="12" letter-spacing="-0.4">13.86</text>
<circle cx="513.5" cy="506.4" r="3.6" fill="#00cc33"/><path d="M521 506.4 H1424" stroke="#00cc33" stroke-width="1.3" stroke-dasharray="4.5 4.5" fill="none" opacity="0.85"/><path d="M1438.5 506.4 L1424.5 501.4 L1428 506.4 L1424.5 511.4 Z" fill="#00cc33"/><text x="1443" y="510.7" fill="#00cc33" font-size="12" letter-spacing="-0.4">11.5</text>
<circle cx="513.5" cy="479.9" r="3.6" fill="#e00000"/><path d="M521 479.9 H1424" stroke="#e00000" stroke-width="1.3" stroke-dasharray="4.5 4.5" fill="none" opacity="0.85"/><path d="M1438.5 479.9 L1424.5 474.9 L1428 479.9 L1424.5 484.9 Z" fill="#e00000"/><text x="1443" y="484.2" fill="#e00000" font-size="12" letter-spacing="-0.4">17.37</text>
<path d="M1054.24 524.40 A13.60 13.60 0 0 1 1081.44 524.40 C1081.44 536.90 1071.84 543.40 1067.84 552.60 C1063.84 543.40 1054.24 536.90 1054.24 524.40 Z" fill="#ffc800"/><text x="1067.6" y="535.6" fill="#fff" font-size="12" text-anchor="middle" letter-spacing="-0.5">0.35</text>
<path d="M745.74 296.70 A13.60 13.60 0 0 1 772.94 296.70 C772.94 309.20 763.34 315.70 759.34 324.90 C755.34 315.70 745.74 309.20 745.74 296.70 Z" fill="#00cc33"/><text x="759.1" y="307.9" fill="#fff" font-size="12" text-anchor="middle" letter-spacing="-0.5">50.64</text>
<path d="M678.25 524.17 A13.60 13.60 0 0 1 705.45 524.17 C705.45 536.67 695.85 543.17 691.85 552.37 C687.85 543.17 678.25 536.67 678.25 524.17 Z" fill="#00cc33"/><text x="691.7" y="535.4" fill="#fff" font-size="12" text-anchor="middle" letter-spacing="-0.5">0.3</text>
<path d="M745.74 222.70 A13.60 13.60 0 0 1 772.94 222.70 C772.94 235.20 763.34 241.70 759.34 250.90 C755.34 241.70 745.74 235.20 745.74 222.70 Z" fill="#e00000"/><text x="759.1" y="233.9" fill="#fff" font-size="12" text-anchor="middle" letter-spacing="-0.5">66.96</text>
<path d="M668.61 517.17 A13.60 13.60 0 0 1 695.81 517.17 C695.81 529.67 686.21 536.17 682.21 545.37 C678.21 536.17 668.61 529.67 668.61 517.17 Z" fill="#e00000"/><text x="682.0" y="528.4" fill="#fff" font-size="12" text-anchor="middle" letter-spacing="-0.5">1.9</text>
<path d="M868.2 174 H891.0" stroke="#ffc800" stroke-width="1.3"/><circle cx="879.2" cy="174" r="5.600" fill="#fff" stroke="#ffc800" stroke-width="1.3"/><text x="894.5" y="178.3" fill="#555" font-size="12" letter-spacing="-1.400">A相电流</text><path d="M944.2 174 H967.0" stroke="#00cc33" stroke-width="1.3"/><circle cx="955.2" cy="174" r="5.600" fill="#fff" stroke="#00cc33" stroke-width="1.3"/><text x="970.5" y="178.3" fill="#555" font-size="12" letter-spacing="-1.400">B相电流</text><path d="M1018.7 174 H1041.5" stroke="#e00000" stroke-width="1.3"/><circle cx="1029.7" cy="174" r="5.600" fill="#fff" stroke="#e00000" stroke-width="1.3"/><text x="1045.0" y="178.3" fill="#555" font-size="12" letter-spacing="-1.400">C相电流</text>
<g fill="none" stroke="#e5343f" stroke-width="1.3" stroke-linejoin="miter"><path d="M1302.400 173.700 H1316.600 V185.600 H1306.400 V169.700"/><path d="M1330.500 170.200 L1328 173.700 L1330.500 177.200 M1328 173.700 H1338.800 V185.600 H1327.400 V178.200"/><path d="M1349.800 169.900 H1357 L1360.100 173.600 V185.800 H1349.800 Z M1350 177.300 H1360 M1350 180 H1360 M1350 182.800 H1360"/><path d="M1351.300 174.400 H1356.800" stroke-width="1.800"/><path d="M1371.200 185.600 H1385 M1371.200 177.100 H1373.500 L1375.600 170.400 L1377.800 181 L1379.800 176 L1380.900 179.300 H1385"/><path d="M1396 185.600 H1409 M1396.800 182.800 V177.200 H1399 V182.800 Z M1401.600 182.800 V173.800 H1403.800 V182.800 Z M1406.200 182.800 V169.900 H1408.400 V182.800 Z"/><path d="M1420.400 176.800 A6.800 6.800 0 0 1 1433 174.600 M1433.600 179.600 A6.800 6.800 0 0 1 1421 181.800 M1433.400 171 V174.800 H1429.600 M1420.600 185.400 V181.600 H1424.400"/><path d="M1450.900 169.700 V182 M1445.600 176.700 L1450.900 182 L1456.200 176.700 M1445.200 182.200 V185.600 H1456.600 V182.200"/></g>
</svg>
 <div class="stl">统计值：</div><div class="str">（单位：A）</div>
 <table id="tbl"><thead><tr><th>电力参数</th><th>最大值</th><th>最大值时间</th><th>最小值</th><th>最小值时间</th><th>平均值</th></tr></thead>
 <tbody>
<tr><td>A相电流</td><td>34.5</td><td>2017-06-05 13:10:00</td><td>29.5</td><td>2017-06-05 00:10:00</td><td>31.5</td></tr>
<tr><td>B相电流</td><td>36.4</td><td>2017-06-05 13:10:00</td><td>29.8</td><td>2017-06-05 00:10:00</td><td>32.1</td></tr>
<tr><td>C相电流</td><td>35.9</td><td>2017-06-05 13:10:00</td><td>28.9</td><td>2017-06-05 00:10:00</td><td>32.4</td></tr>

 </tbody></table>
</div>
</body></html>
